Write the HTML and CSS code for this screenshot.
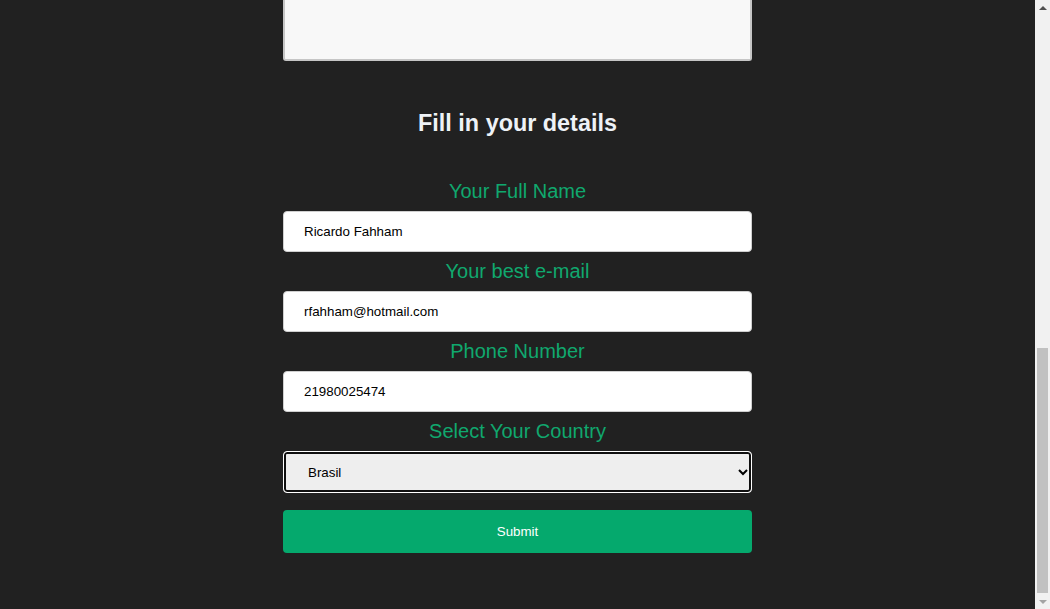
FILE: index.html
```html
<!DOCTYPE html>
<html lang="en">
<head>
<meta charset="utf-8">
<title>Fill in your details</title>
<link rel="stylesheet" href="styles.css">
</head>
<body>
<div class="viewport">
  <main class="page">
    <div class="preview"></div>
    <h2 class="title">Fill in your details</h2>
    <form class="form">
      <label class="label" for="name">Your Full Name</label>
      <input class="field" id="name" type="text" value="Ricardo Fahham">
      <label class="label" for="email">Your best e-mail</label>
      <input class="field" id="email" type="email" value="rfahham@hotmail.com">
      <label class="label" for="phone">Phone Number</label>
      <input class="field" id="phone" type="tel" value="21980025474">
      <label class="label" for="country">Select Your Country</label>
      <select class="select is-focused" id="country">
        <option>Brasil</option>
      </select>
      <button class="submit" type="button">Submit</button>
    </form>
  </main>
</div>
<aside class="scrollbar" aria-hidden="true">
  <div class="scroll-btn scroll-up"><span class="tri tri-up"></span></div>
  <div class="scroll-track"><div class="scroll-thumb"></div></div>
  <div class="scroll-btn scroll-down"><span class="tri tri-down"></span></div>
</aside>
</body>
</html>
```
FILE: styles.css
```css
html, body {
  height: 100%;
}
body {
  margin: 0;
  display: flex;
  overflow: hidden;
  background: #212121;
  font-family: "Liberation Sans", Arial, sans-serif;
}
.viewport {
  flex: 1;
  min-width: 0;
}
.page {
  width: 469px;
  margin: 0 auto;
}
.preview {
  box-sizing: border-box;
  height: 61px;
  background: #f8f8f8;
  border: 2px solid #c6c6c6;
  border-top: none;
  border-radius: 0 0 3px 3px;
}
.title {
  margin: 48px 0 35px;
  font-size: 23.4px;
  line-height: 28px;
  font-weight: bold;
  color: #eef2f7;
  text-align: center;
}
.form {
  display: flex;
  flex-direction: column;
}
.label {
  margin: 8px 0;
  font-size: 20px;
  line-height: 23px;
  color: #10a86e;
  text-align: center;
}
.field {
  box-sizing: border-box;
  height: 41px;
  padding: 0 20px;
  border: 1px solid #cfcfcf;
  border-radius: 4px;
  background: #fff;
  color: #000;
  font-family: "Liberation Sans", Arial, sans-serif;
  font-size: 13.33px;
}
.select {
  box-sizing: border-box;
  height: 42px;
  padding: 0 16px 0 20px;
  border: 1px solid #fff;
  border-radius: 4px;
  background: #eeeeee;
  color: #000;
  font-family: "Liberation Sans", Arial, sans-serif;
  font-size: 13.33px;
}
.is-focused {
  box-shadow: inset 0 0 0 2px #101010;
  outline: none;
}
.submit {
  margin-top: 17px;
  height: 43px;
  border: none;
  border-radius: 4px;
  background: #05a96d;
  color: #fff;
  font-family: "Liberation Sans", Arial, sans-serif;
  font-size: 13.33px;
}

/* scrollbar */
.scrollbar {
  width: 15px;
  flex: none;
  display: flex;
  flex-direction: column;
  background: #f1f1f1;
}
.scroll-btn {
  height: 15px;
  display: flex;
  align-items: center;
  justify-content: center;
}
.tri {
  width: 0;
  height: 0;
  border-left: 4px solid transparent;
  border-right: 4px solid transparent;
}
.tri-up {
  border-bottom: 4px solid #505050;
}
.tri-down {
  border-top: 4px solid #a3a3a3;
}
.scroll-track {
  flex: 1;
  display: flex;
  flex-direction: column;
  justify-content: flex-end;
}
.scroll-thumb {
  height: 245px;
  margin: 0 2px 1px;
  background: #c1c1c1;
}
```
